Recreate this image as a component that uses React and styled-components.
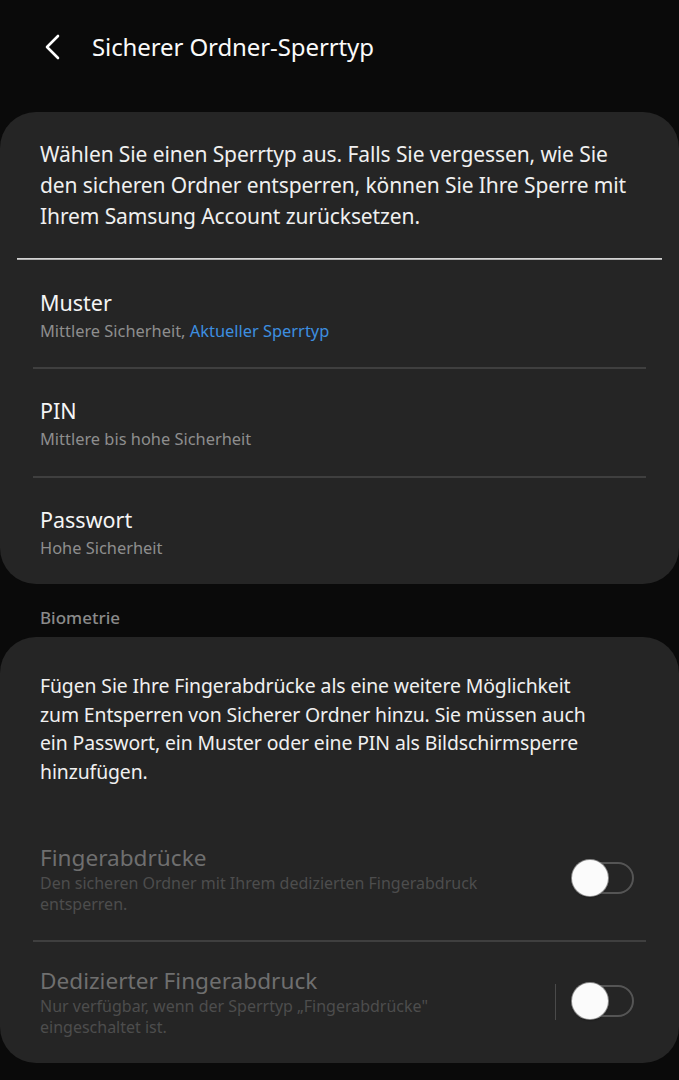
import React from "react";
import styled, { createGlobalStyle } from "styled-components";

const Global = createGlobalStyle`
  html, body { margin: 0; padding: 0; background: #0a0a0a; }
  body { font-family: "Noto Sans", Roboto, sans-serif; -webkit-font-smoothing: antialiased; }
`;

const Page = styled.div`
  width: 679px;
  min-height: 1080px;
  background: #0a0a0a;
  color: #f2f2f2;
  display: flex;
  flex-direction: column;
`;

const Header = styled.header`
  height: 94px;
  display: flex;
  align-items: center;
  padding-left: 42px;
  gap: 28px;
  box-sizing: border-box;
  margin-bottom: 18px;
`;

const BackButton = styled.button`
  width: 22px;
  height: 28px;
  padding: 0;
  border: 0;
  background: none;
  display: flex;
  align-items: center;
  justify-content: center;
  color: #fff;
`;

const Title = styled.h1`
  margin: 0;
  font-size: 24px;
  line-height: 30px;
  font-weight: 400;
  color: #fafafa;
  letter-spacing: -0.1px;
`;

const Card = styled.section`
  background: #252525;
  border-radius: 36px;
  display: flex;
  flex-direction: column;
  overflow: hidden;
`;

const Intro = styled.p`
  margin: 0;
  padding: ${(p) => p.$pad};
  font-size: ${(p) => p.$size}px;
  line-height: ${(p) => p.$lh}px;
  color: #f0f0f0;
  white-space: nowrap;
  letter-spacing: -0.1px;
`;

const StrongDivider = styled.div`
  height: 2px;
  margin: 0 17px;
  background: linear-gradient(#e6e6e6, #9a9a9a);
`;

const Divider = styled.div`
  height: 2px;
  margin: 0 33px;
  background: #3f3f3f;
`;

const Row = styled.div`
  height: ${(p) => p.$h}px;
  box-sizing: border-box;
  padding: ${(p) => p.$top || 0}px 45px 0 40px;
  display: flex;
  align-items: center;
  justify-content: space-between;
`;

const RowText = styled.div`
  display: flex;
  flex-direction: column;
  gap: ${(p) => p.$gap || 0}px;
`;

const ItemTitle = styled.div`
  font-size: ${(p) => (p.$disabled ? 22.6 : 21.5)}px;
  line-height: 28px;
  color: ${(p) => (p.$disabled ? "#6f6f6f" : "#f5f5f5")};
`;

const ItemSub = styled.div`
  font-size: ${(p) => (p.$disabled ? 16 : 16.4)}px;
  line-height: ${(p) => (p.$disabled ? 21 : 22)}px;
  color: ${(p) => (p.$disabled ? "#4d4d4d" : "#8e8e8e")};
  white-space: nowrap;
`;

const Accent = styled.span`
  color: #3d8fe0;
`;

const SectionLabel = styled.div`
  padding: 23px 40px 8px;
  font-size: 17px;
  line-height: 22px;
  font-weight: 500;
  color: #8a8a8a;
`;

const Controls = styled.div`
  display: flex;
  align-items: center;
  gap: 20px;
`;

const VBar = styled.div`
  width: 1px;
  height: 36px;
  background: #4a4a4a;
`;

const Track = styled.div`
  position: relative;
  width: 58px;
  height: 32px;
  box-sizing: border-box;
  border: 2px solid #555;
  border-radius: 16px;
  margin-top: -3px;
`;

const Knob = styled.div`
  position: absolute;
  left: -6px;
  top: -4px;
  width: 36px;
  height: 36px;
  border-radius: 50%;
  background: #fbfbfb;
  box-shadow: 0 0 0 1px #8a8a8a, 0 1px 2px rgba(0, 0, 0, 0.6);
`;

const Switch = () => (
  <Track>
    <Knob />
  </Track>
);

const Chevron = () => (
  <svg width="18" height="26" viewBox="0 0 18 26" fill="none">
    <path d="M14 2 L3 13 L14 24" stroke="#fff" strokeWidth="2.6" strokeLinecap="round" strokeLinejoin="round" />
  </svg>
);

export default function App() {
  return (
    <>
      <Global />
      <Page>
        <Header>
          <BackButton aria-label="Zurück">
            <Chevron />
          </BackButton>
          <Title>Sicherer Ordner-Sperrtyp</Title>
        </Header>

        <Card>
          <Intro $pad="27px 40px 26px" $lh={31} $size={21}>
            Wählen Sie einen Sperrtyp aus. Falls Sie vergessen, wie Sie
            <br />
            den sicheren Ordner entsperren, können Sie Ihre Sperre mit
            <br />
            Ihrem Samsung Account zurücksetzen.
          </Intro>
          <StrongDivider />
          <Row $h={107} $top={4}>
            <RowText $gap={3}>
              <ItemTitle>Muster</ItemTitle>
              <ItemSub>
                Mittlere Sicherheit, <Accent>Aktueller Sperrtyp</Accent>
              </ItemSub>
            </RowText>
          </Row>
          <Divider />
          <Row $h={107} $top={2}>
            <RowText $gap={3}>
              <ItemTitle>PIN</ItemTitle>
              <ItemSub>Mittlere bis hohe Sicherheit</ItemSub>
            </RowText>
          </Row>
          <Divider />
          <Row $h={106} $top={2}>
            <RowText $gap={3}>
              <ItemTitle>Passwort</ItemTitle>
              <ItemSub>Hohe Sicherheit</ItemSub>
            </RowText>
          </Row>
        </Card>

        <SectionLabel>Biometrie</SectionLabel>

        <Card>
          <Intro $pad="35px 40px 32px" $lh={28.7} $size={19.4}>
            Fügen Sie Ihre Fingerabdrücke als eine weitere Möglichkeit
            <br />
            zum Entsperren von Sicherer Ordner hinzu. Sie müssen auch
            <br />
            ein Passwort, ein Muster oder eine PIN als Bildschirmsperre
            <br />
            hinzufügen.
          </Intro>
          <Row $h={121}>
            <RowText $gap={1}>
              <ItemTitle $disabled>Fingerabdrücke</ItemTitle>
              <ItemSub $disabled>
                Den sicheren Ordner mit Ihrem dedizierten Fingerabdruck
                <br />
                entsperren.
              </ItemSub>
            </RowText>
            <Controls>
              <Switch />
            </Controls>
          </Row>
          <Divider />
          <Row $h={121}>
            <RowText $gap={1}>
              <ItemTitle $disabled>Dedizierter Fingerabdruck</ItemTitle>
              <ItemSub $disabled>
                Nur verfügbar, wenn der Sperrtyp „Fingerabdrücke"
                <br />
                eingeschaltet ist.
              </ItemSub>
            </RowText>
            <Controls>
              <VBar />
              <Switch />
            </Controls>
          </Row>
        </Card>
      </Page>
    </>
  );
}
